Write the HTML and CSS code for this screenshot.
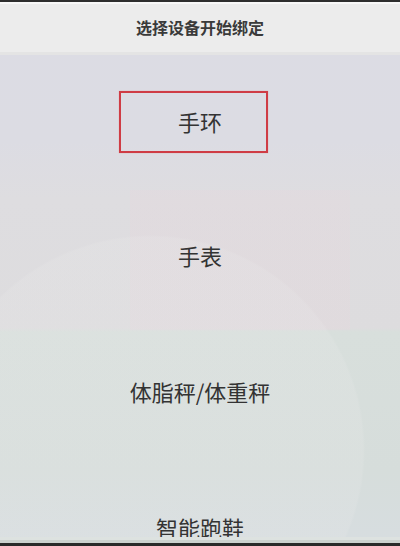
FILE: index.html
```html
<!DOCTYPE html>
<html lang="zh-CN">
<head>
<meta charset="utf-8">
<title>选择设备开始绑定</title>
<link rel="stylesheet" href="styles.css">
</head>
<body>
<div class="screen">
  <header class="topbar">
    <h1 class="title">选择设备开始绑定</h1>
  </header>
  <ul class="device-list">
    <li class="device"><span class="device-name is-selected">手环</span></li>
    <li class="device"><span class="device-name">手表</span></li>
    <li class="device"><span class="device-name">体脂秤/体重秤</span></li>
    <li class="device"><span class="device-name">智能跑鞋</span></li>
  </ul>
  <div class="bottom-edge"></div>
</div>
</body>
</html>
```
FILE: styles.css
```css
* {
  box-sizing: border-box;
}

html,
body {
  margin: 0;
  padding: 0;
}

body {
  width: 400px;
  height: 546px;
  overflow: hidden;
  font-family: "Noto Sans CJK SC", "Noto Sans", sans-serif;
  color: #333;
}

.screen {
  position: relative;
  width: 400px;
  height: 546px;
  display: flex;
  flex-direction: column;
  overflow: hidden;
  background:
    radial-gradient(circle 215px at 150px 450px, rgba(236, 236, 236, 0.18) 99%, rgba(236, 236, 236, 0) 100%),
    linear-gradient(to right, rgba(0, 0, 0, 0) 130px, rgba(232, 214, 220, 0.25) 130px, rgba(232, 214, 220, 0.25) 350px, rgba(0, 0, 0, 0) 350px) 0 190px / 400px 140px no-repeat,
    linear-gradient(to bottom, #dcdce4 0, #dcdce3 140px, #dedde0 200px, #dddcde 328px, #d8dfdc 332px, #d6dddb 470px, #d7dde0 546px);
}

/* header */
.topbar {
  flex: none;
  height: 55px;
  background: #ececec;
  border-top: 2px solid #2e2e2e;
  box-shadow: inset 0 2px 0 #f8f8f8, inset 0 -3px 0 #e4e4e4;
  display: flex;
  align-items: center;
  justify-content: center;
  padding-bottom: 3px;
}

.title {
  margin: 0;
  font-size: 16px;
  font-weight: 700;
  line-height: 1;
  color: #3a3a3a;
}

/* device options */
.device-list {
  list-style: none;
  margin: 0;
  padding: 0;
  display: flex;
  flex-direction: column;
}

.device {
  flex: none;
  height: 136px;
  display: flex;
  align-items: center;
  justify-content: center;
}

.device:first-child {
  height: 132px;
}

.device-name {
  position: relative;
  font-size: 22px;
  line-height: 1;
  color: #333;
}

/* red highlight around the current choice */
.device-name.is-selected::after {
  content: "";
  position: absolute;
  left: -59px;
  top: -19px;
  width: 145px;
  height: 58px;
  border: 2.5px solid #cf3c45;
  box-shadow: 0 0 1px rgba(230, 100, 100, 0.5);
}

/* bottom frame edge */
.bottom-edge {
  position: absolute;
  left: 0;
  right: 0;
  bottom: 0;
  height: 9px;
  background: linear-gradient(to bottom, #dde2e0 0, #dde2e0 3px, #ccd2cf 3px, #ccd2cf 6px, #2a2a2a 6px);
}
```
